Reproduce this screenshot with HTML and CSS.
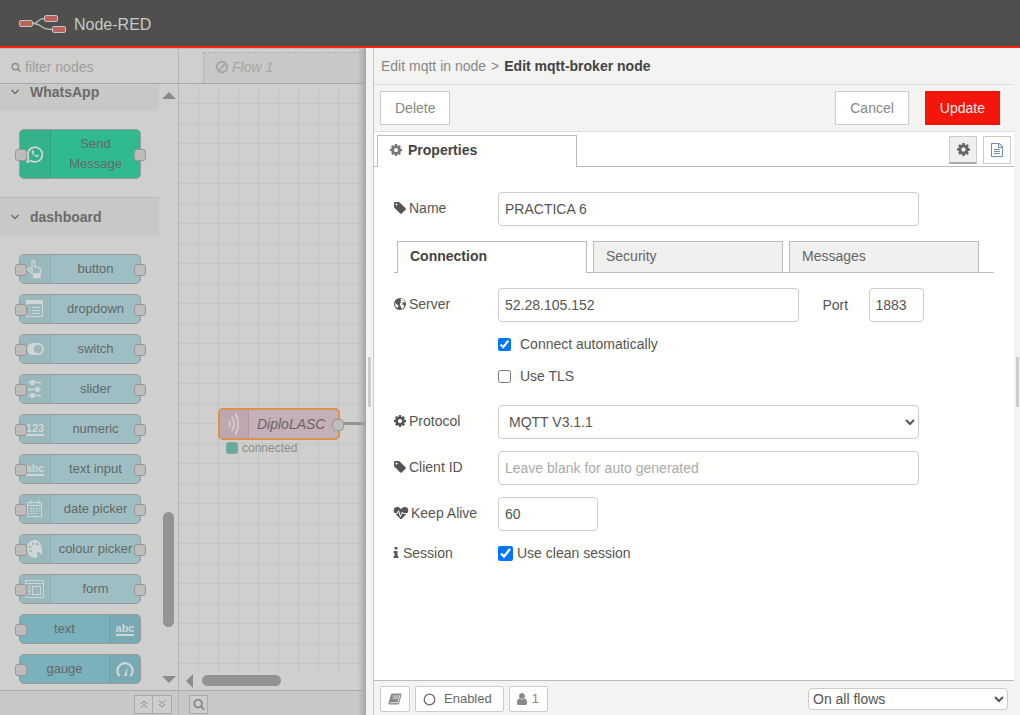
FILE: index.html
```
<!DOCTYPE html>
<html lang="en">
<head>
<meta charset="utf-8">
<title>Node-RED</title>
<link rel="stylesheet" href="styles.css">
</head>
<body>
<svg class="defs" aria-hidden="true">
  <symbol id="cog" viewBox="0 0 1792 1792"><path d="M1152 896q0-106-75-181t-181-75-181 75-75 181 75 181 181 75 181-75 75-181zm512-109v222q0 12-8 23t-20 13l-185 28q-19 54-39 91 35 50 107 138 10 12 10 25t-9 23q-27 37-99 108t-94 71q-12 0-26-9l-138-108q-44 23-91 38-16 136-29 186-7 28-36 28h-222q-14 0-24.5-8.5t-11.5-21.5l-28-184q-49-16-90-37l-141 107q-10 9-25 9-14 0-25-11-126-114-165-168-7-10-7-23 0-12 8-23 15-21 51-66.5t54-70.5q-27-50-41-99l-183-27q-13-2-21-12.5t-8-23.5v-222q0-12 8-23t19-13l186-28q14-46 39-92-40-57-107-138-10-12-10-24 0-10 9-23 26-36 98.5-107.5t94.5-71.5q13 0 26 10l138 107q44-23 91-38 16-136 29-186 7-28 36-28h222q14 0 24.5 8.5t11.5 21.5l28 184q49 16 90 37l142-107q9-9 24-9 13 0 25 10 129 119 165 170 7 8 7 22 0 12-8 23-15 21-51 66.5t-54 70.5q26 50 41 98l183 28q13 2 21 12.5t8 23.5z"/></symbol>
  <symbol id="tag" viewBox="0 0 1792 1792"><path d="M576 448q0-53-37.5-90.5t-90.5-37.5-90.5 37.5-37.5 90.5 37.5 90.5 90.5 37.5 90.5-37.5 37.5-90.5zm1067 576q0 53-37 90l-491 492q-39 37-91 37-53 0-90-37l-715-716q-38-37-64.5-101t-26.5-117v-416q0-52 38-90t90-38h416q53 0 117 26.5t102 64.5l715 714q37 39 37 91z"/></symbol>
  <symbol id="search" viewBox="0 0 1792 1792"><path d="M1216 832q0-185-131.5-316.5t-316.5-131.5-316.5 131.5-131.5 316.5 131.5 316.5 316.5 131.5 316.5-131.5 131.5-316.5zm512 832q0 52-38 90t-90 38q-54 0-90-38l-343-342q-179 124-399 124-143 0-273.5-55.5t-225-150-150-225-55.5-273.5 55.5-273.5 150-225 225-150 273.5-55.5 273.5 55.5 225 150 150 225 55.5 273.5q0 220-124 399l343 343q37 37 37 90z"/></symbol>
  <symbol id="user" viewBox="0 0 1792 1792"><path d="M1536 1399q0 109-62.5 187t-150.5 78h-854q-88 0-150.5-78t-62.5-187q0-85 8.5-160.5t31.5-152 58.5-131 94-89 134.5-34.5q131 128 313 128t313-128q76 0 134.5 34.5t94 89 58.5 131 31.5 152 8.5 160.5zm-256-887q0 159-112.5 271.5t-271.5 112.5-271.5-112.5-112.5-271.5 112.5-271.5 271.5-112.5 271.5 112.5 112.5 271.5z"/></symbol>
  <symbol id="file" viewBox="0 0 1792 1792"><path d="M1596 380q28 28 48 76t20 88v1152q0 40-28 68t-68 28h-1344q-40 0-68-28t-28-68v-1600q0-40 28-68t68-28h896q40 0 88 20t76 48zm-444-244v376h376q-10-29-22-41l-313-313q-12-12-41-22zm384 1528v-1024h-416q-40 0-68-28t-28-68v-416h-768v1536h1280zm-1024-864q0-14 9-23t23-9h704q14 0 23 9t9 23v64q0 14-9 23t-23 9h-704q-14 0-23-9t-9-23v-64zm736 224q14 0 23 9t9 23v64q0 14-9 23t-23 9h-704q-14 0-23-9t-9-23v-64q0-14 9-23t23-9h704zm0 256q14 0 23 9t9 23v64q0 14-9 23t-23 9h-704q-14 0-23-9t-9-23v-64q0-14 9-23t23-9h704z"/></symbol>
  <symbol id="info" viewBox="512 0 768 1792"><path d="M1216 1344v128q0 26-19 45t-45 19h-512q-26 0-45-19t-19-45v-128q0-26 19-45t45-19h64v-384h-64q-26 0-45-19t-19-45v-128q0-26 19-45t45-19h384q26 0 45 19t19 45v576h64q26 0 45 19t19 45zm-128-1152v192q0 26-19 45t-45 19h-256q-26 0-45-19t-19-45v-192q0-26 19-45t45-19h256q26 0 45 19t19 45z"/></symbol>
  <symbol id="globe" viewBox="0 0 14 14"><circle cx="7" cy="7" r="6"/><path fill="#fffffd" d="M7.4 2l2-.2 2 2 .8 2-1.600-.8-1 1-.6 1.400 1.400.4 1 .8-.6 1.600-1.400 1.600-1-.2-.4-2-1.200-1.400.2-1.600 1-1-.6-1.200.8-1zM1.800 5.600l1.600 1.600 1.600.8.4 1.200-1 1.800L2.600 9.400z"/></symbol>
  <symbol id="heart" viewBox="0 0 16 14"><path d="M8 13.400 2.200 7.800C.4 6 .2 3.200 1.800 1.800 3.400.4 6.200.6 8 3c1.800-2.400 4.600-2.600 6.200-1.200 1.600 1.400 1.400 4.200-.4 6z"/><path d="M0 7.600h4.200l1.400-3 1.800 6 2-4.600 1 1.600H16" fill="none" stroke="#fffffd" stroke-width="1"/></symbol>
  <symbol id="book" viewBox="0 0 14 14"><path d="M4.300 1.500h8.700q.8.300.5 1.200l-2.300 8.500q-.4 1.300-1.600 1.300H1.700Q.2 12.300.5 10.700L2.800 3q.4-1.400 1.500-1.500z"/><path d="M5.200 4h5.400M4.700 6h5.400M2 10.700h7.800l2.300-8" fill="none" stroke="#fffffd" stroke-width=".8"/></symbol>
  <symbol id="chev" viewBox="0 0 10 10"><path d="M1.500 3 5 6.500 8.500 3" fill="none" stroke="currentColor" stroke-width="1.300"/></symbol>
</svg>

<header class="header">
  <svg class="logo" width="48" height="20" viewBox="0 0 48 20">
    <path d="M14 8.500c8 0 5-5 12-5M14 8.500c12 0 6 6 20 6" fill="none" stroke="#b5b5b2" stroke-width="1.400"/>
    <g fill="#b9655b" stroke="#c3c3c0"><rect x="1.500" y="5.500" width="13" height="6" rx="1.500"/><rect x="26.500" y="0.500" width="13" height="6" rx="1.500"/><rect x="34.500" y="11.500" width="13" height="6" rx="1.500"/></g>
  </svg>
  <span>Node-RED</span>
</header>

<main class="main">
  <aside class="palette">
    <label class="filter"><svg class="ic10"><use href="#search"/></svg><input type="search" placeholder="filter nodes" aria-label="filter nodes"></label>
    <div class="palette-body">
      <div class="palette-list">
        <button class="category first"><svg class="ic10"><use href="#chev"/></svg>WhatsApp</button>
        <div class="nodes">
          <div class="node whatsapp in out"><span class="icon"><svg width="20" height="20" viewBox="0 0 20 20"><path d="M2.300 18l1.200-4.200A7.300 7.300 0 1 1 6.300 16.800z" fill="none" stroke="currentColor" stroke-width="1.700"/><path d="M7.300 6.300c-1.300 1-.7 3 1.200 4.800s3.800 2.600 5 1.300c.5-.7.300-1.100-1.700-1.900l-1 1c-1-.4-1.900-1.300-2.300-2.300l.7-.9c-.5-1.500-1-2.300-1.900-2z"/></svg></span><span class="name">Send Message</span></div>
        </div>
        <button class="category"><svg class="ic10"><use href="#chev"/></svg>dashboard</button>
        <div class="nodes">
          <div class="node in out"><span class="icon"><svg width="20" height="20" viewBox="0 0 20 20" fill="none" stroke="currentColor" stroke-width="1.300"><path d="M7 13V3q0-1.700 1.300-1.700T9.600 3v4.500L14.500 9q1.500.5 1.300 2l-.8 4H8.500L3 11.200q-1-1 0-1.800t2 .2L7 11"/><path d="M8.500 15v3.500H15V15" fill="currentColor"/></svg></span><span class="name">button</span></div>
          <div class="node in out"><span class="icon"><svg width="20" height="20" viewBox="0 0 20 20" fill="none" stroke="currentColor"><path d="M1.500 2v15.500h16V2"/><path d="M1 3h17" stroke-width="4"/><path d="M4 8.500h1.500M4 11.500h1.500M4 14.500h1.500M7 8.500h8M7 11.500h8M7 14.500h8"/></svg></span><span class="name">dropdown</span></div>
          <div class="node in out"><span class="icon"><svg width="20" height="20" viewBox="0 0 20 20"><rect x="2" y="4" width="17" height="12" rx="6"/><circle cx="13" cy="10" r="4.300" fill="#98b8bd"/></svg></span><span class="name">switch</span></div>
          <div class="node in out"><span class="icon"><svg width="20" height="20" viewBox="0 0 20 20" stroke="currentColor" fill="none"><path d="M3 3.500h13M3 10.500h13M3 16.500h13" stroke-width="1.500"/><path d="M7.500 1v5M12.500 8v5M7.500 14v5" stroke-width="3.500"/></svg></span><span class="name">slider</span></div>
          <div class="node in out"><span class="icon"><b class="glyph">123</b></span><span class="name">numeric</span></div>
          <div class="node in out"><span class="icon"><b class="glyph">abc</b></span><span class="name">text input</span></div>
          <div class="node in out"><span class="icon"><svg width="20" height="20" viewBox="0 0 20 20" fill="none" stroke="currentColor"><path d="M2.500 3.500h14v14h-14zM2.500 6.500h14M5.500 1v4M13.500 1v4"/><path d="M5 9.500h10M5 12h10M5 14.500h7" stroke-dasharray="2 1"/></svg></span><span class="name">date picker</span></div>
          <div class="node in out"><span class="icon"><svg width="20" height="20" viewBox="0 0 20 20"><path d="M9.500 1C4.500 1 2 5 2 9.500 2 15 6 19 9.500 19c2.500 0 3.500-1.500 2.800-3-.8-2 .2-3.500 1.700-3 1.500.4 1.500 3 2.500 3 1.500-4 .5-15-7-15z"/><g fill="#98b8bd"><circle cx="5" cy="8" r="1.300"/><circle cx="5.500" cy="12" r="1.300"/><circle cx="8" cy="4.700" r="1.300"/><circle cx="12" cy="5" r="1.300"/></g></svg></span><span class="name">colour picker</span></div>
          <div class="node in out"><span class="icon"><svg width="20" height="20" viewBox="0 0 20 20" fill="none" stroke="currentColor"><path d="M.5 1.500h18v17H.5zM.5 4.500h18"/><rect x="7.500" y="7.500" width="8" height="8"/><path d="M3 7.500h2.500M3 10h2.500M3 12.500h2.500M3 15h2.500"/></svg></span><span class="name">form</span></div>
          <div class="node strong in"><span class="name">text</span><span class="icon"><b class="glyph">abc</b></span></div>
          <div class="node strong in"><span class="name">gauge</span><span class="icon"><svg width="20" height="20" viewBox="0 0 20 20"><path d="M4.700 17.200a7.600 7.600 0 1 1 10.600 0" fill="none" stroke="currentColor" stroke-width="2.200"/><path d="M9 16.500l3.500-8.500-.5 8.500q-.5 1.500-3 0z"/></svg></span></div>
        </div>
      </div>
      <div class="vscroll"><i class="tri up"></i><i class="thumb"></i><i class="tri down"></i></div>
    </div>
    <footer class="strip palette-foot">
      <button class="mini" aria-label="Collapse all"><svg width="10" height="10" viewBox="0 0 10 10"><path d="M2 5l3-3 3 3M2 8.500l3-3 3 3"/></svg></button><button class="mini" aria-label="Expand all"><svg width="10" height="10" viewBox="0 0 10 10"><path d="M2 1.500l3 3 3-3M2 5l3 3 3-3"/></svg></button>
    </footer>
  </aside>

  <section class="workspace">
    <div class="flow-tabs"><a class="flow-tab" href="#"><svg width="14" height="14" viewBox="0 0 14 14"><circle cx="7" cy="7" r="5.200"/><path d="M3.500 10.500l7-7"/></svg>Flow 1</a></div>
    <div class="canvas">
      <i class="wire"></i>
      <div class="mqtt-node"><span class="icon"><svg width="14" height="26" viewBox="0 0 14 26" fill="none" stroke="currentColor" stroke-width="1.600"><path d="M2 10q1.600 3 0 6M5 6q4 7 0 14M8 2q6.500 11 0 22"/></svg></span><em class="name">DiploLASC</em><i class="port"></i></div>
      <div class="status"><i></i>connected</div>
    </div>
    <div class="hscroll"><i class="tri left"></i><i class="thumb"></i></div>
    <footer class="strip"><button class="mini find" aria-label="Search"><svg class="ic12"><use href="#search"/></svg></button></footer>
  </section>

  <div class="grip left-grip"><i></i></div>
  <section class="editor">
    <div class="crumbs"><a href="#">Edit mqtt in node</a><span>&gt;</span><b>Edit mqtt-broker node</b></div>
    <div class="toolbar"><button class="btn">Delete</button><button class="btn cancel">Cancel</button><button class="btn primary">Update</button></div>
    <div class="tabbar">
      <button class="tab active"><svg class="ic14"><use href="#cog"/></svg>Properties</button>
      <span class="tab-tools"><button class="tool on" aria-label="Properties"><svg class="ic15"><use href="#cog"/></svg></button><button class="tool" aria-label="Description"><svg class="ic14"><use href="#file"/></svg></button></span>
    </div>
    <form class="form">
      <div class="row"><label for="name"><svg class="ic14"><use href="#tag"/></svg>Name</label><input class="field wide" id="name" value="PRACTICA 6"></div>
      <div class="subtabs"><button type="button" class="subtab active">Connection</button><button type="button" class="subtab">Security</button><button type="button" class="subtab">Messages</button></div>
      <div class="row"><label for="server"><svg class="ic14"><use href="#globe"/></svg>Server</label><input class="field half" id="server" value="52.28.105.152"><label class="port-label" for="port">Port</label><input class="field port-field" id="port" value="1883"></div>
      <div class="row check"><input type="checkbox" id="auto" checked><label for="auto">Connect automatically</label></div>
      <div class="row check last"><input type="checkbox" id="tls"><label for="tls">Use TLS</label></div>
      <div class="row"><label for="protocol"><svg class="ic14"><use href="#cog"/></svg>Protocol</label><select class="field wide" id="protocol"><option>MQTT V3.1.1</option></select></div>
      <div class="row"><label for="client"><svg class="ic14"><use href="#tag"/></svg>Client ID</label><input class="field wide" id="client" placeholder="Leave blank for auto generated"></div>
      <div class="row"><label for="keep"><svg class="ic16"><use href="#heart"/></svg>Keep Alive</label><input class="field short" id="keep" value="60"></div>
      <div class="row"><label class="session" for="clean"><svg class="ic-info"><use href="#info"/></svg>Session</label><input class="clean" type="checkbox" id="clean" checked><label class="clean-label" for="clean">Use clean session</label></div>
    </form>
    <footer class="editor-foot">
      <button class="foot-btn" aria-label="Help"><svg class="ic14"><use href="#book"/></svg></button>
      <button class="foot-btn enabled"><svg width="13" height="13" viewBox="0 0 13 13"><circle cx="6.500" cy="6.500" r="5.300" fill="none" stroke="#666" stroke-width="1.200"/></svg>Enabled</button>
      <button class="foot-btn users"><svg class="ic14"><use href="#user"/></svg>1</button>
      <select class="scope" aria-label="Scope"><option>On all flows</option></select>
    </footer>
  </section>
  <div class="grip right-grip"><i></i></div>
</main>
</body>
</html>
```
FILE: styles.css
```
* { box-sizing: border-box; }
body { margin: 0; height: 100vh; display: flex; flex-direction: column; overflow: hidden; font: 14px/20px "Liberation Sans", Arial, sans-serif; color: #555; fill: currentColor; background: #f3f3f1; }
button, input, select { font: inherit; color: inherit; margin: 0; }
button { cursor: pointer; padding: 0; }
a { color: inherit; text-decoration: none; }
svg { flex: none; }
.defs { position: absolute; width: 0; height: 0; }
.ic10 { width: 10px; height: 10px; }
.ic12 { width: 12px; height: 12px; }
.ic14 { width: 14px; height: 14px; }
.ic15 { width: 15px; height: 15px; }
.ic16 { width: 16px; height: 14px; }
.ic-info { width: 6px; height: 14px; }

.header { flex: none; height: 48px; border-bottom: 2px solid #fc2403; background: #4f4f4d; color: #c8c8c6; display: flex; align-items: center; gap: 8px; padding: 3px 18px 0; font-size: 16px; }
.main { flex: 1; min-height: 0; display: grid; grid-template-columns: 179px 187px 7px minmax(0, 1fr) 6px; }

.palette { background: #cfcfcd; border-right: 1px solid #b4b4b2; border-top: 1px solid #b9b9b7; display: flex; flex-direction: column; min-height: 0; }
.filter { height: 35px; flex: none; border-bottom: 1px solid #a9a9a7; display: flex; align-items: center; gap: 4px; padding: 2px 0 0 11px; color: #8d8d8b; }
.filter input { width: 120px; border: 0; padding: 0; background: none; outline: 0; }
.filter input::placeholder { color: #a0a09e; }
.palette-body { flex: 1; min-height: 0; display: flex; }
.palette-list { flex: 1; overflow: hidden; }
.category { display: flex; align-items: center; gap: 9px; width: 100%; height: 39px; padding: 0 11px 0 10px; border: 0; border-top: 1px solid #bababa; background: #c8c8c6; color: #6b6b69; font-weight: bold; }
.category svg { margin-right: 1px; }
.category.first { margin-top: -12px; }
.nodes { padding: 18px 18px 18px 19px; display: flex; flex-direction: column; gap: 10px; }
.node { position: relative; display: flex; min-height: 30px; border: 1px solid #999997; border-radius: 5px; background: #9fbec3; color: #646866; font-size: 13px; text-align: center; }
.node .name { flex: 1; align-self: center; }
.node .icon { width: 31px; display: flex; align-items: center; justify-content: center; background: #98b8bd; border-right: 1px solid #8fafb4; color: #d0d6d4; border-radius: 4px 0 0 4px; }
.node.strong { background: #7ab1bc; }
.node.strong .icon { background: #77aab5; border-right: 0; border-left: 1px solid #6da2ad; border-radius: 0 4px 4px 0; }
.node.whatsapp { background: #31ba92; }
.node.whatsapp .name { padding: 4px 16px; }
.node.whatsapp .icon { background: #34b18c; border-color: #2da583; }
.node.in::before, .node.out::after, .port { content: ""; position: absolute; top: calc(50% - 5px); width: 10px; height: 10px; border: 1px solid #979795; border-radius: 3px; background: #bdbdbb; }
.node.in::before { left: -5px; }
.node.out::after { right: -6px; }
.glyph { font-size: 11px; line-height: 12px; border-bottom: 2px solid; }
.vscroll { width: 19px; display: flex; flex-direction: column; align-items: center; padding: 8px 0 7px; }
.vscroll .thumb { width: 11px; height: 115px; border-radius: 6px; background: #939391; margin: auto 0 49px; }
.tri { border: 7px solid transparent; }
.tri.up { border-top: 0; border-bottom-color: #8b8b89; }
.tri.down { border-bottom: 0; border-top-color: #8b8b89; }
.tri.left { border-left: 0; border-right-color: #8b8b89; }
.strip { flex: none; height: 25px; border-top: 1px solid #a9a9a7; background: #c8c8c6; display: flex; align-items: center; padding: 2px 6px 0 10px; }
.palette-foot { justify-content: flex-end; }
.mini { width: 19px; height: 19px; border: 1px solid #aaaaa8; background: #cdcdcb; color: #888886; display: flex; align-items: center; justify-content: center; }
.mini + .mini { border-left: 0; }
.palette-foot svg { fill: none; stroke: currentColor; stroke-width: 1; }

.workspace { position: relative; background: #cfcfcd; border-top: 1px solid #b9b9b7; display: flex; flex-direction: column; min-width: 0; min-height: 0; }
.workspace::after { content: ""; position: absolute; inset: 0 0 0 auto; width: 8px; background: linear-gradient(to right, transparent, #a5a5a3); }
.flow-tabs { height: 35px; flex: none; padding: 3px 0 0 24px; border-bottom: 1px solid #a9a9a7; }
.flow-tab { display: flex; align-items: center; gap: 3px; height: 31px; padding: 0 0 2px 11px; border: 1px dashed #b0b0ae; border-width: 1px 0 0 1px; background: #c8c8c6; color: #a7a7a5; font-style: italic; }
.flow-tab svg { fill: none; stroke: currentColor; stroke-width: 2; }
.canvas { position: relative; flex: 1; overflow: hidden; background: linear-gradient(to right, transparent 19px, #c4c4c2 19px) 0 0 / 20px 20px, linear-gradient(transparent 19px, #c4c4c2 19px) 0 0 / 20px 20px; }
.mqtt-node { position: absolute; left: 39px; top: 324px; width: 122px; height: 32px; display: flex; align-items: center; border: 2px solid #de8f48; border-radius: 5px; background: #c5afb8; color: #666664; }
.mqtt-node .icon { width: 29px; height: 28px; display: flex; align-items: center; justify-content: center; background: #bba8b0; border-right: 1px solid #ac9ba2; color: #d5cfd2; }
.mqtt-node .name { padding-left: 8px; }
.port { right: -6px; width: 12px; height: 12px; border-radius: 4px; }
.wire { position: absolute; left: 160px; right: 0; top: 338px; height: 3px; background: #929290; }
.status { position: absolute; left: 47px; top: 354px; display: flex; align-items: center; gap: 4px; color: #8b8b89; font-size: 12px; }
.status i { width: 12px; height: 12px; border: 1px solid #7daca2; border-radius: 3px; background: #65a99d; }
.hscroll { flex: none; height: 19px; display: flex; align-items: center; gap: 9px; padding-left: 7px; }
.hscroll .thumb { width: 79px; height: 11px; border-radius: 6px; background: #939391; }

.grip { display: flex; align-items: center; background: #f3f3f1; }
.grip i { width: 3px; height: 50px; background: #ccc; }
.left-grip { padding-left: 2px; }
.right-grip { padding-left: 2px; }

.editor { display: flex; flex-direction: column; min-height: 0; border-left: 1px solid #c6c6c4; background: #fffffd; }
.crumbs { flex: none; display: flex; gap: 5px; height: 37px; padding: 8px 7px; border-bottom: 1px solid #dededc; background: #f3f3f1; color: #888; }
.crumbs b { color: #444; }
.toolbar { flex: none; display: flex; align-items: center; gap: 16px; height: 47px; padding: 0 14px 0 6px; border-bottom: 1px solid #dededc; background: #f3f3f1; }
.btn { height: 34px; padding: 0 14px; border: 1px solid #ccc; background: #fffffd; color: #888; }
.btn.cancel { margin-left: auto; }
.btn.primary { border-color: #f4150b; background: #f4150b; color: #eee; }
.tabbar { flex: none; height: 35px; display: flex; justify-content: space-between; padding: 3px 3px 0; border-bottom: 1px solid #bbb; }
.tab { width: 200px; height: 32px; display: flex; align-items: center; gap: 5px; padding: 0 11px 3px; border: 1px solid #bbb; border-bottom: 0; background: #fffffd; color: #444; font-weight: bold; }
.tab svg { color: #777; }
.tab-tools { display: flex; gap: 6px; padding-top: 1px; }
.tool { width: 28px; height: 28px; display: flex; align-items: center; justify-content: center; border: 1px solid #ccc; background: #fffffd; color: #6f8fb0; }
.tool.on { border-bottom: 2px solid #aaa; background: #efefed; color: #666; }

.form { flex: 1; min-height: 0; padding: 25px 20px 0 19px; overflow: hidden; }
.row { display: flex; align-items: center; margin-bottom: 12px; }
.row > label:first-child { flex: none; width: 105px; display: flex; align-items: center; gap: 2px; padding-bottom: 2px; }
.row > .session:first-child { gap: 4px; padding-bottom: 0; }
.field { height: 34px; border: 1px solid #ccc; border-radius: 4px; background: #fffffd; padding: 0 6px; min-width: 0; outline: 0; }
.field::placeholder { color: #aaa; }
.wide { width: 70%; }
.half { width: 50%; }
.short { width: 100px; }
.port-label { width: 46px; margin-left: 24px; }
.port-field { width: 55px; }
.subtabs { display: flex; gap: 6px; height: 32px; margin: 15px 0 15px 1px; padding-left: 3px; border-bottom: 1px solid #bbb; }
.subtab { flex: 0 1 190px; height: 31px; padding: 0 12px 2px; border: 1px solid #bbb; border-bottom: 0; background: #f0f0ee; color: #666; text-align: left; }
.subtab.active { height: 32px; padding-bottom: 3px; background: #fffffd; color: #444; font-weight: bold; }
.row.check { gap: 9px; padding-left: 105px; }
.row.check.last { margin-bottom: 19px; }
.row input[type="checkbox"] { flex: none; width: 13px; height: 13px; }
.row input.clean { width: 15px; height: 15px; }
.clean-label { margin-left: 4px; }

.editor-foot { flex: none; height: 35px; display: flex; align-items: center; gap: 5px; padding: 2px 6px 0; border-top: 1px solid #bbb; background: #f3f3f1; font-size: 13px; }
.foot-btn { min-width: 30px; height: 26px; display: flex; align-items: center; justify-content: center; gap: 8px; border: 1px solid #ccc; border-radius: 2px; background: #fffffd; color: #666; }
.foot-btn svg { color: #888; }
.enabled { padding: 0 11px 0 7px; }
.users { padding: 0 8px 0 5px; gap: 3px; color: #888; }
.scope { width: 200px; height: 22px; margin-left: auto; padding: 0; border: 1px solid #ccc; border-radius: 4px; background: #fffffd; font-size: 14px; }
```
